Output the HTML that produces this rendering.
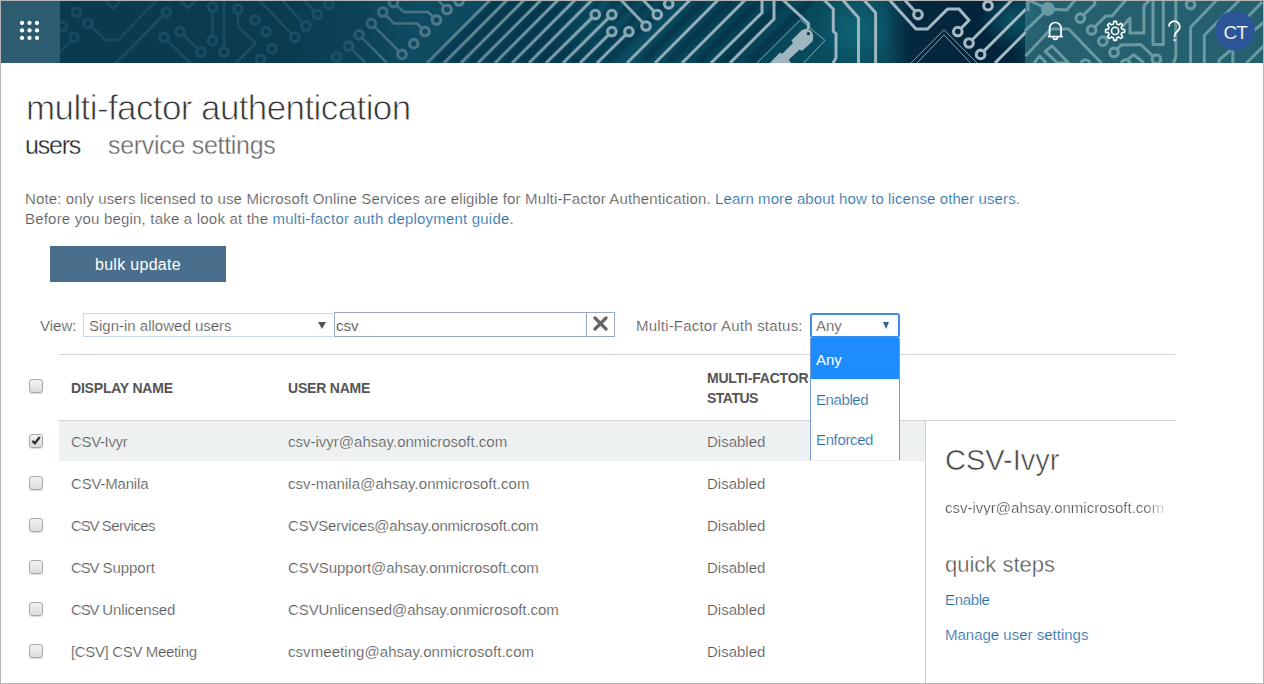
<!DOCTYPE html>
<html><head><meta charset="utf-8">
<style>
*{box-sizing:border-box;margin:0;padding:0}
html,body{width:1264px;height:684px;overflow:hidden;background:#fff}
body{position:relative;font-family:"Liberation Sans",sans-serif;color:#575757}
.a{position:absolute;white-space:nowrap;line-height:1}
#frame{position:absolute;left:0;top:0;width:1264px;height:684px;border:1px solid #b4b4b4;pointer-events:none;z-index:50}
#hdr{position:absolute;left:0;top:0;width:1264px;height:63px;background:#0b3a4e;overflow:hidden}
.lnk{color:#276ca6}
.cb{position:absolute;left:29px;width:14px;height:14px;border:1px solid #a9a9a9;border-radius:3px;background:linear-gradient(#f2f2f2,#dcdcdc);box-shadow:0 1px 1px rgba(0,0,0,.15)}
.t15{font-size:15px;-webkit-text-stroke:0.2px #fff}
.hd{font-size:14px;font-weight:700;color:#555;letter-spacing:-0.2px}
</style></head><body>
<div id="hdr">
<!--HDR--><svg style="position:absolute;left:0;top:0" width="1264" height="63" viewBox="0 0 1264 63">
<defs><filter id="bl" x="-10%" y="-50%" width="120%" height="200%"><feGaussianBlur stdDeviation="2.5"/></filter>
<linearGradient id="bg" x1="0" y1="0" x2="1264" y2="0" gradientUnits="userSpaceOnUse">
<stop offset="0.05" stop-color="#0a3a4d"/><stop offset="0.22" stop-color="#0a3b4f"/>
<stop offset="0.29" stop-color="#0c4358"/><stop offset="0.33" stop-color="#0f4c61"/>
<stop offset="0.37" stop-color="#0d4a5f"/><stop offset="0.44" stop-color="#0a4459"/>
<stop offset="0.50" stop-color="#0b4d62"/><stop offset="0.58" stop-color="#084458"/>
<stop offset="0.66" stop-color="#0a4c5e"/><stop offset="0.70" stop-color="#0a4d5f"/><stop offset="0.72" stop-color="#04283d"/>
<stop offset="0.80" stop-color="#03233a"/><stop offset="0.81" stop-color="#053045"/>
</linearGradient>
<linearGradient id="ln" x1="0" y1="0" x2="1264" y2="0" gradientUnits="userSpaceOnUse">
<stop offset="0.05" stop-color="#174a60"/><stop offset="0.27" stop-color="#1c5066"/>
<stop offset="0.30" stop-color="#3d6a7d"/><stop offset="0.40" stop-color="#668c9b"/>
<stop offset="0.46" stop-color="#84a1ad"/><stop offset="0.55" stop-color="#95afba"/>
<stop offset="0.80" stop-color="#a6bbc5"/>
</linearGradient>
<radialGradient id="g1" cx="590" cy="22" r="45" gradientUnits="userSpaceOnUse"><stop offset="0" stop-color="#0f6679" stop-opacity="0.8"/><stop offset="1" stop-color="#0f6679" stop-opacity="0"/></radialGradient>
<radialGradient id="g2" cx="855" cy="30" r="40" gradientUnits="userSpaceOnUse"><stop offset="0" stop-color="#0f6a7a" stop-opacity="0.8"/><stop offset="1" stop-color="#0f6a7a" stop-opacity="0"/></radialGradient>
<radialGradient id="g3" cx="1012" cy="20" r="32" gradientUnits="userSpaceOnUse"><stop offset="0" stop-color="#0f6a7a" stop-opacity="0.7"/><stop offset="1" stop-color="#0f6a7a" stop-opacity="0"/></radialGradient>
</defs>
<rect width="1264" height="63" fill="url(#bg)"/>
<rect width="1264" height="63" fill="url(#g1)"/>
<g stroke="#03253a" stroke-width="7" opacity="0.55" filter="url(#bl)"><polyline points="436,63 499,0"/><polyline points="453,63 516,0"/><polyline points="470,63 533,0"/><polyline points="487,63 550,0"/><polyline points="504,63 567,0"/><polyline points="521,63 584,0"/><polyline points="538,63 601,0"/><polyline points="555,63 618,0"/><polyline points="572,63 635,0"/><polyline points="589,63 652,0"/><polyline points="606,63 669,0"/><polyline points="641,63 704,0"/><polyline points="668,63 731,0"/><polyline points="697,63 760,0"/><polyline points="722,63 785,0"/><polyline points="748,63 811,0"/></g><rect width="1264" height="63" fill="url(#g2)"/><rect width="1264" height="63" fill="url(#g3)"/>
<g fill="none" stroke="url(#ln)" stroke-width="2.5" stroke-linejoin="round">
<polyline points="88,23.4 105.6,40 118,40 157,0"/><polyline points="74,37.3 52,60"/><polyline points="166.4,12 116,63"/><polyline points="164,37.3 190,63"/><polyline points="180,31.6 201,52"/><polyline points="212.5,7 212.5,40.5"/><polyline points="105,0 113,9 121,0"/><polyline points="180,0 188,8 196,0"/><polyline points="224,0 224,52"/><polyline points="238,9 238,26.6 255.6,43 236,63"/><polyline points="259,0 294.8,37.3"/><polyline points="282,0 306,26"/><polyline points="303.7,0 317.6,14.6"/><polyline points="348.6,46.2 365.7,63"/><circle cx="76.5" cy="12" r="4.3" stroke-width="3.1" fill="url(#bg)"/><circle cx="88" cy="23.4" r="4.3" stroke-width="3.1" fill="url(#bg)"/><circle cx="74" cy="37.3" r="4.3" stroke-width="3.1" fill="url(#bg)"/><circle cx="166.4" cy="12" r="4.3" stroke-width="3.1" fill="url(#bg)"/><circle cx="164" cy="37.3" r="4.3" stroke-width="3.1" fill="url(#bg)"/><circle cx="180" cy="31.6" r="4.3" stroke-width="3.1" fill="url(#bg)"/><circle cx="201" cy="52" r="4.3" stroke-width="3.1" fill="url(#bg)"/><circle cx="62.6" cy="26.6" r="4.3" stroke-width="3.1" fill="url(#bg)"/><circle cx="212.5" cy="40.5" r="4.3" stroke-width="3.1" fill="url(#bg)"/><circle cx="212.5" cy="7" r="4.3" stroke-width="3.1" fill="url(#bg)"/><circle cx="224" cy="52" r="4.3" stroke-width="3.1" fill="url(#bg)"/><circle cx="238" cy="9" r="4.3" stroke-width="3.1" fill="url(#bg)"/><circle cx="255" cy="20" r="4.3" stroke-width="3.1" fill="url(#bg)"/><circle cx="266" cy="31.6" r="4.3" stroke-width="3.1" fill="url(#bg)"/><circle cx="272" cy="48.7" r="4.3" stroke-width="3.1" fill="url(#bg)"/><circle cx="260.6" cy="59.5" r="4.3" stroke-width="3.1" fill="url(#bg)"/><circle cx="294.8" cy="37.3" r="4.3" stroke-width="3.1" fill="url(#bg)"/><circle cx="306" cy="26" r="4.3" stroke-width="3.1" fill="url(#bg)"/><circle cx="317.6" cy="14.6" r="4.3" stroke-width="3.1" fill="url(#bg)"/><circle cx="329" cy="4.4" r="4.3" stroke-width="3.1" fill="url(#bg)"/><circle cx="348.6" cy="46.2" r="4.3" stroke-width="3.1" fill="url(#bg)"/><circle cx="336.6" cy="57" r="4.3" stroke-width="3.1" fill="url(#bg)"/><polyline points="359,34.8 387,63"/><polyline points="382.7,12 394,23.4 417,23.4 425,31.6"/><polyline points="393.5,2.5 404,12 428,12 436.5,20"/><polyline points="447,9.5 438,0"/><polyline points="371.3,23.4 402,54.4"/><circle cx="359" cy="34.8" r="4.3" stroke-width="3.1" fill="url(#bg)"/><circle cx="382.7" cy="12" r="4.3" stroke-width="3.1" fill="url(#bg)"/><circle cx="425" cy="31.6" r="4.3" stroke-width="3.1" fill="url(#bg)"/><circle cx="393.5" cy="2.5" r="4.3" stroke-width="3.1" fill="url(#bg)"/><circle cx="436.5" cy="20" r="4.3" stroke-width="3.1" fill="url(#bg)"/><circle cx="447" cy="9.5" r="4.3" stroke-width="3.1" fill="url(#bg)"/><circle cx="459" cy="1" r="4.3" stroke-width="3.1" fill="url(#bg)"/><circle cx="371.3" cy="23.4" r="4.3" stroke-width="3.1" fill="url(#bg)"/><circle cx="402" cy="54.4" r="4.3" stroke-width="3.1" fill="url(#bg)"/><circle cx="413.7" cy="43.7" r="4.3" stroke-width="3.1" fill="url(#bg)"/>
</g>
<g fill="none" stroke="url(#ln)" stroke-width="3" stroke-linejoin="round"><polyline points="427,63 490,0"/><polyline points="444,63 507,0"/><polyline points="461,63 524,0"/><polyline points="478,63 541,0"/><polyline points="495,63 558,0"/><polyline points="512,63 575,0"/><polyline points="529,63 592,0"/><polyline points="546,63 595.3,14.6"/><polyline points="563,63 611.8,14.6"/><polyline points="580,63 611.8,31.6"/><polyline points="597,63 628.9,31.6"/><polyline points="646,26 621,0"/><polyline points="657.3,14.6 643,0"/><polyline points="627,63 690,0"/><polyline points="655,63 718,0"/><polyline points="682,63 745,0"/><polyline points="711,63 762,12.7 762,0"/><polyline points="730,63 774,19 774,0"/><polyline points="783,0 808.4,23.4 808.4,29"/><polygon style="fill:#9fb5bf;stroke:none" points="769.7,63 780,52.6 782.4,53.8 793,43 791.4,40.4 802,30 806.8,28.5 811,30.5 813,34 813,39.2 812.4,41.6 802,51 799.7,49.5 788.7,59.7 791,63"/><polyline points="824,0 833.3,9 833.3,31.3 836,33.7 836,58 833,63"/><polyline points="842.7,0 858.5,17.7 858.5,63"/><polyline points="864,0 875.6,12.7 875.6,63"/><polyline points="889.5,0 916,29 927.5,29 947.7,8.9 959,8.9 969,20.3 957.8,31.6"/><polyline points="904.7,0 918,14.6"/><polyline points="969,43 1012,0"/><polyline points="980.6,54.4 1026,9"/><polyline points="995,63 1026,32"/><circle cx="595.3" cy="14.6" r="4.3" stroke-width="3.1" fill="url(#bg)"/><circle cx="611.8" cy="14.6" r="4.3" stroke-width="3.1" fill="url(#bg)"/><circle cx="611.8" cy="31.6" r="4.3" stroke-width="3.1" fill="url(#bg)"/><circle cx="628.9" cy="31.6" r="4.3" stroke-width="3.1" fill="url(#bg)"/><circle cx="646" cy="26" r="4.3" stroke-width="3.1" fill="url(#bg)"/><circle cx="657.3" cy="14.6" r="4.3" stroke-width="3.1" fill="url(#bg)"/><circle cx="668.7" cy="3.8" r="4.3" stroke-width="3.1" fill="url(#bg)"/><circle cx="957.8" cy="31.6" r="4.3" stroke-width="3.1" fill="url(#bg)"/><circle cx="918" cy="14.6" r="4.3" stroke-width="3.1" fill="url(#bg)"/><circle cx="988" cy="5.7" r="4.3" stroke-width="3.1" fill="url(#bg)"/><circle cx="969" cy="43" r="4.3" stroke-width="3.1" fill="url(#bg)"/><circle cx="980.6" cy="54.4" r="4.3" stroke-width="3.1" fill="url(#bg)"/></g>
<g fill="none" stroke="#a0b6c0" stroke-width="1" opacity="0.85"><polyline points="757,63 800.5,19.9 825,40.4 803.7,63"/><polyline points="911,63 944,29.7 977,63"/><polyline points="917,63 944,34.8 970.5,63"/></g><circle cx="808.4" cy="33.7" r="1.6" fill="#06364a"/>
<g fill="none" stroke="#a4b9c3" stroke-width="3" stroke-linejoin="round"><polyline points="1048,8.9 1025,31"/><polyline points="1028,0 1048,8.9 1066.8,10 1075,0"/><polyline points="1028,0 1028,11"/><polyline points="1080.3,18.2 1094.8,4.2 1094.8,0"/><polyline points="1091.6,30 1106,15.9 1112,15.9 1125.7,0"/><polyline points="1114,52.4 1121,44.9 1140.5,44.4 1154.2,57"/><polyline points="1025.6,56 1050.9,29 1068.6,29 1101.4,63"/><polygon points="1045.3,51.4 1051.8,45.8 1068.6,63 1057.4,63"/><polyline points="1034,63 1039.6,56.1 1046.2,63"/><polyline points="1149.6,0 1143.9,5.7 1143.9,33 1130,33 1130,18 1122,27"/><polyline points="1153,0 1153,44.4 1163.3,44.4 1163.3,0"/><polyline points="1175.8,0 1175.8,57 1173.5,63"/><polyline points="1216.8,0 1190.6,27.3 1190.6,63"/><polyline points="1239.6,0 1204.3,35.3 1204.3,63"/><polyline points="1262,2 1232.8,33 1232.8,63"/><polyline points="1264,22 1219,60 1219,63"/><polyline points="1264,45.6 1246.4,63"/><polyline points="1123.4,63 1133.7,54.7 1144,63"/><circle cx="1048" cy="8.9" r="5.5" fill="#a4b9c3"/><circle cx="1080.3" cy="18.2" r="4.3" stroke-width="3.1" fill="url(#bg)"/><circle cx="1091.6" cy="30" r="4.3" stroke-width="3.1" fill="url(#bg)"/><circle cx="1102.8" cy="41.2" r="4.3" stroke-width="3.1" fill="url(#bg)"/><circle cx="1114" cy="52.4" r="4.3" stroke-width="3.1" fill="url(#bg)"/><circle cx="1156.4" cy="59.2" r="4.3" stroke-width="3.1" fill="url(#bg)"/><circle cx="1085.5" cy="64" r="4.3" stroke-width="3.1" fill="url(#bg)"/><circle cx="1125.7" cy="64" r="4.3" stroke-width="3.1" fill="url(#bg)"/><circle cx="1190.6" cy="4.6" r="4.3" stroke-width="3.1" fill="url(#bg)"/></g>
<rect x="1025" y="0" width="239" height="63" fill="rgb(62,131,141)" fill-opacity="0.58"/>
<rect x="0" y="0" width="60" height="63" fill="#2d5b70"/>
</svg><!--/HDR--><svg style="position:absolute;left:0;top:0" width="1264" height="63" viewBox="0 0 1264 63">
<g fill="#fff">
<circle cx="22" cy="22.9" r="2.15"/><circle cx="29.5" cy="22.9" r="2.15"/><circle cx="37" cy="22.9" r="2.15"/>
<circle cx="22" cy="30.4" r="2.15"/><circle cx="29.5" cy="30.4" r="2.15"/><circle cx="37" cy="30.4" r="2.15"/>
<circle cx="22" cy="37.9" r="2.15"/><circle cx="29.5" cy="37.9" r="2.15"/><circle cx="37" cy="37.9" r="2.15"/>
</g>
<g fill="none" stroke="#fff" stroke-width="1.7">
<path d="M1049.6 36.5V28.2a5.7 5.7 0 0 1 11.4 0V36.5"/>
<path d="M1047.8 36.6H1062.8"/>
<path d="M1053.2 37.3a2.1 2.1 0 0 0 4.2 0"/>
</g>
<g fill="none" stroke="#fff" stroke-width="1.6">
<circle cx="1115.1" cy="30.9" r="3.6"/>
<path d="M1121.88 29.16 L1124.61 29.62 L1124.61 32.18 L1121.88 32.64 L1121.13 34.46 L1122.73 36.72 L1120.92 38.53 L1118.66 36.93 L1116.84 37.68 L1116.38 40.41 L1113.82 40.41 L1113.36 37.68 L1111.54 36.93 L1109.28 38.53 L1107.47 36.72 L1109.07 34.46 L1108.32 32.64 L1105.59 32.18 L1105.59 29.62 L1108.32 29.16 L1109.07 27.34 L1107.47 25.08 L1109.28 23.27 L1111.54 24.87 L1113.36 24.12 L1113.82 21.39 L1116.38 21.39 L1116.84 24.12 L1118.66 24.87 L1120.92 23.27 L1122.73 25.08 L1121.13 27.34Z" stroke-linejoin="round"/>
</g>
<g fill="none" stroke="#fff" stroke-width="1.7" stroke-linecap="butt">
<path d="M1168.9 26.6a5.4 5.4 0 1 1 8.6 4.4c-2.2 1.8-3.1 3.3-3.1 5.5v0.6"/>
</g>
<circle cx="1174.5" cy="40.2" r="1.1" fill="#fff"/>
<circle cx="1235" cy="30.9" r="19.9" fill="#2c5597"/>
<text x="1235.2" y="38.9" text-anchor="middle" font-family="Liberation Sans" font-size="19" fill="#fff" letter-spacing="-0.9" stroke="#2c5597" stroke-width="0.2">CT</text>
</svg>
</div>

<!-- title -->
<div class="a" style="left:26px;top:90px;font-size:35px;color:#333;letter-spacing:-0.6px;-webkit-text-stroke:0.8px #fff">multi-factor authentication</div>
<div class="a" style="left:25px;top:133px;font-size:25px;color:#222;letter-spacing:-1.2px;-webkit-text-stroke:0.35px #fff">users</div>
<div class="a" style="left:108px;top:133px;font-size:25px;color:#666;letter-spacing:-0.3px;-webkit-text-stroke:0.35px #fff">service settings</div>

<div class="a t15" style="left:25px;top:191px;letter-spacing:0.14px">Note: only users licensed to use Microsoft Online Services are eligible for Multi-Factor Authentication. <span class="lnk" style="letter-spacing:0.09px">Learn more about how to license other users.</span></div>
<div class="a t15" style="left:25px;top:211px;letter-spacing:0.2px">Before you begin, take a look at the <span class="lnk">multi-factor auth deployment guide.</span></div>

<div class="a" style="left:50px;top:246px;width:176px;height:36px;background:#4a6f8c;color:#fff;font-size:16px;line-height:38px;text-align:center;letter-spacing:0.3px">bulk update</div>

<!-- filter row -->
<div class="a t15" style="left:40px;top:318px">View:</div>
<div class="a" style="left:83px;top:313px;width:250px;height:24px;border:1px solid #c6dbef;border-right:none"></div>
<div class="a t15" style="left:89px;top:318px">Sign-in allowed users</div>
<div class="a" style="left:317.5px;top:322px;width:0;height:0;border-left:4px solid transparent;border-right:4px solid transparent;border-top:7px solid #555"></div>
<div class="a" style="left:334px;top:312px;width:281px;height:25px;border:1px solid #93aac0"></div>
<div class="a" style="left:586px;top:312px;width:1px;height:25px;background:#93aac0"></div>
<div class="a t15" style="left:336px;top:318px;color:#444">csv</div>
<svg class="a" style="left:593px;top:316px" width="15" height="15" viewBox="0 0 15 15"><path d="M2 2L13 13M13 2L2 13" stroke="#666" stroke-width="3.2" stroke-linecap="round"/></svg>

<div class="a t15" style="left:636px;top:318px;letter-spacing:0.2px">Multi-Factor Auth status:</div>
<div class="a" style="left:810px;top:313px;width:90px;height:25px;border:2px solid #3d8ee6;border-radius:3px"></div>
<div class="a t15" style="left:816px;top:318px">Any</div>
<div class="a" style="left:883px;top:322px;width:0;height:0;border-left:3.5px solid transparent;border-right:3.5px solid transparent;border-top:7px solid #2a6a90"></div>

<!-- table -->
<div class="a" style="left:59px;top:354px;width:1116px;height:1px;background:#cdd3d8"></div>
<div class="cb" style="top:379px"></div>
<div class="a hd" style="left:71px;top:381px">DISPLAY NAME</div>
<div class="a hd" style="left:288px;top:381px">USER NAME</div>
<div class="a hd" style="left:707px;top:371px">MULTI-FACTOR</div>
<div class="a hd" style="left:707px;top:391px;letter-spacing:-0.5px">STATUS</div>
<div class="a" style="left:59px;top:420px;width:1116px;height:1px;background:#cdd3d8"></div>
<div class="a" style="left:59px;top:421px;width:866px;height:40px;background:#eef1f1"></div>
<div class="a" style="left:925px;top:420px;width:1px;height:264px;background:#c9cdd0"></div>

<div class="cb" style="top:434px"></div>
<svg class="a" style="left:31px;top:435px" width="11" height="11" viewBox="0 0 11 11"><path d="M1.3 5.8L3.9 8.3L8.8 2" stroke="#333" stroke-width="2.3" fill="none"/></svg>
<div class="a t15" style="left:71px;top:434px;letter-spacing:-0.35px">CSV-Ivyr</div>
<div class="a t15" style="left:288px;top:434px">csv-ivyr@ahsay.onmicrosoft.com</div>
<div class="a t15" style="left:707px;top:434px">Disabled</div>

<div class="cb" style="top:476px"></div>
<div class="a t15" style="left:71px;top:476px;letter-spacing:-0.19px">CSV-Manila</div>
<div class="a t15" style="left:288px;top:476px;letter-spacing:0.045px">csv-manila@ahsay.onmicrosoft.com</div>
<div class="a t15" style="left:707px;top:476px">Disabled</div>

<div class="cb" style="top:518px"></div>
<div class="a t15" style="left:71px;top:518px;letter-spacing:-0.55px"><span style="letter-spacing:-1.2px">CSV</span> Services</div>
<div class="a t15" style="left:288px;top:518px;letter-spacing:-0.19px">CSVServices@ahsay.onmicrosoft.com</div>
<div class="a t15" style="left:707px;top:518px">Disabled</div>

<div class="cb" style="top:560px"></div>
<div class="a t15" style="left:71px;top:560px;letter-spacing:-0.02px"><span style="letter-spacing:-1.2px">CSV</span> Support</div>
<div class="a t15" style="left:288px;top:560px;letter-spacing:-0.03px">CSVSupport@ahsay.onmicrosoft.com</div>
<div class="a t15" style="left:707px;top:560px">Disabled</div>

<div class="cb" style="top:602px"></div>
<div class="a t15" style="left:71px;top:602px;letter-spacing:-0.13px"><span style="letter-spacing:-1.2px">CSV</span> Unlicensed</div>
<div class="a t15" style="left:288px;top:602px;letter-spacing:-0.08px">CSVUnlicensed@ahsay.onmicrosoft.com</div>
<div class="a t15" style="left:707px;top:602px">Disabled</div>

<div class="cb" style="top:644px"></div>
<div class="a t15" style="left:71px;top:644px;letter-spacing:-0.35px">[CSV] CSV Meeting</div>
<div class="a t15" style="left:288px;top:644px;letter-spacing:0.06px">csvmeeting@ahsay.onmicrosoft.com</div>
<div class="a t15" style="left:707px;top:644px">Disabled</div>

<!-- dropdown -->
<div class="a" style="left:810px;top:338px;width:90px;height:122px;background:#fff;border-left:1px solid #7899d6;border-right:1px solid #7899d6"></div>
<div class="a" style="left:811px;top:338px;width:88px;height:41px;background:#1e8cff"></div>
<div class="a t15" style="left:816px;top:352px;color:#fff;-webkit-text-stroke:0">Any</div>
<div class="a t15 lnk" style="left:816px;top:392px;letter-spacing:-0.4px">Enabled</div>
<div class="a t15 lnk" style="left:816px;top:432px;letter-spacing:-0.37px">Enforced</div>

<!-- side panel -->
<div class="a" style="left:945px;top:446px;font-size:29px;color:#444;-webkit-text-stroke:0.55px #fff">CSV-Ivyr</div>
<div class="a t15" style="left:945px;top:500px;width:225px;-webkit-mask-image:linear-gradient(to right,#000 0,#000 198px,rgba(0,0,0,0.25) 220px)">csv-ivyr@ahsay.onmicrosoft.com</div>
<div class="a" style="left:945px;top:554px;font-size:22px;color:#505050;-webkit-text-stroke:0.4px #fff">quick steps</div>
<div class="a t15 lnk" style="left:945px;top:592px;letter-spacing:-0.35px">Enable</div>
<div class="a t15 lnk" style="left:945px;top:627px">Manage user settings</div>

<div id="frame"></div>
</body></html>
